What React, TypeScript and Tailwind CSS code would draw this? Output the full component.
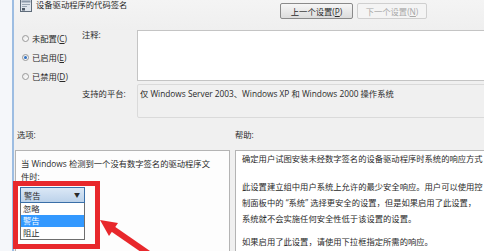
import React from 'react';

const Radio: React.FC<{ checked?: boolean; label: string; hotkey: string }> = ({ checked, label, hotkey }) => (
  <div className="flex items-center h-[13px] gap-[3px]">
    <div className="w-[7px] h-[7px] rounded-full border border-[#9a9a9a] bg-gradient-to-br from-[#e6e6e6] to-[#ffffff] flex items-center justify-center">
      {checked && <div className="w-[3px] h-[3px] rounded-full bg-[#2f6fc0]" />}
    </div>
    <span className="whitespace-nowrap">
      {label}(<u>{hotkey}</u>)
    </span>
  </div>
);

const PolicyIcon = () => (
  <svg width="12" height="13" viewBox="0 0 12 13">
    <rect x="0.5" y="0.5" width="11" height="12" fill="#dfe5ec" stroke="#5f6c7a" />
    <rect x="1.5" y="1.5" width="9" height="2" fill="#8a98a8" />
    <rect x="2" y="5" width="8" height="1" fill="#9aa6b3" />
    <rect x="2" y="7" width="5" height="1" fill="#9aa6b3" />
    <rect x="2" y="9" width="3" height="2.5" fill="#4f5b68" />
  </svg>
);

export default function App() {
  return (
    <div className="w-[484px] h-[251px] overflow-hidden flex relative font-['Open_Sans','Noto_Sans_CJK_SC',sans-serif] text-[8.3px] leading-[13px] text-[#2a2a2a]">
      <div className="w-[12px] shrink-0 bg-[#f5f7fa]" />
      <div className="w-[2px] shrink-0 bg-[#9dbde2]" />

      <div className="flex-1 min-w-0 bg-[#f0f0f0] flex flex-col">
        {/* Header */}
        <div className="h-[30px] shrink-0 flex items-start bg-gradient-to-b from-[#f4f4f4] to-[#efefef]">
          <div className="flex items-center gap-[4px] pl-[6px] -mt-[1px] h-[12px]">
            <PolicyIcon />
            <span className="whitespace-nowrap leading-[10px]">设备驱动程序的代码签名</span>
          </div>
          <div className="ml-auto mr-[57px] mt-[3px] flex gap-[4px]">
            <div className="w-[73px] h-[16px] border border-[#8a8a8a] rounded-[2px] bg-gradient-to-b from-[#f6f6f6] to-[#dcdcdc] flex items-center justify-center whitespace-nowrap">
              上一个设置(<u>P</u>)
            </div>
            <div className="w-[70px] h-[16px] border border-[#cfcfcf] rounded-[2px] bg-[#f4f4f4] text-[#a8a8a8] flex items-center justify-center whitespace-nowrap">
              下一个设置(<u>N</u>)
            </div>
          </div>
        </div>

        {/* State + comment + platform */}
        <div className="h-[88px] shrink-0 flex">
          <div className="w-[68px] shrink-0 pl-[8px] pt-[2px] flex flex-col gap-[6px]">
            <Radio label="未配置" hotkey="C" />
            <Radio label="已启用" hotkey="E" checked />
            <Radio label="已禁用" hotkey="D" />
          </div>
          <div className="w-[55px] shrink-0 flex flex-col">
            <div className="mt-[-2px] whitespace-nowrap">注释:</div>
            <div className="mt-[46px] whitespace-nowrap">支持的平台:</div>
          </div>
          <div className="flex-1 -mr-[6px] flex flex-col">
            <div className="h-[51px] bg-white border border-[#c4c4c4]" />
            <div className="mt-[3px] h-[34px] border border-[#dadada] rounded-[2px] bg-[#f0f0f0] pl-[2px] pt-[2px] whitespace-nowrap">
              仅 Windows Server 2003、Windows XP 和 Windows 2000 操作系统
            </div>
          </div>
        </div>

        {/* Section labels */}
        <div className="h-[32px] shrink-0 flex items-center">
          <div className="w-[221px] pl-[3px] pt-[1px]">选项:</div>
          <div className="pt-[1px]">帮助:</div>
        </div>

        {/* Panels */}
        <div className="flex-1 flex gap-[5px] pl-[1px]">
          <div className="w-[215px] shrink-0 h-[110px] bg-[#fdfdfd] border border-[#b4b4b4] pl-[5px] pt-[6px]">
            <div className="whitespace-nowrap">当 Windows 检测到一个没有数字签名的驱动程序文</div>
            <div>件时:</div>
            <div className="mt-[4px] -ml-[1px] w-[65px]">
              <div className="h-[16px] border border-[#3a6fa8] bg-gradient-to-b from-[#dbe8f6] to-[#bcd2ea] flex items-center justify-between pl-[3px] pr-[4px]">
                <span>警告</span>
                <span className="text-[6px] leading-none">▼</span>
              </div>
              <div className="border border-t-0 border-[#6e6e6e] bg-white">
                <div className="h-[12px] leading-[12px] pl-[2px]">忽略</div>
                <div className="h-[12px] leading-[12px] pl-[2px] bg-[#3399ff] text-white">警告</div>
                <div className="h-[12px] leading-[12px] pl-[2px]">阻止</div>
              </div>
            </div>
          </div>
          <div className="flex-1 -mr-[6px] h-[110px] bg-white border border-[#b4b4b4] pl-[6px] leading-[16px] whitespace-nowrap">
            <div className="leading-[15px]">确定用户试图安装未经数字签名的设备驱动程序时系统的响应方式</div>
            <div className="mt-[13px]">
              <div>此设置建立组中用户系统上允许的最少安全响应。用户可以使用控</div>
              <div>制面板中的 “系统” 选择更安全的设置，但是如果启用了此设置，</div>
              <div>系统就不会实施任何安全性低于该设置的设置。</div>
            </div>
            <div className="mt-[7px]">如果启用了此设置，请使用下拉框指定所需的响应。</div>
          </div>
        </div>
      </div>

      {/* Annotation overlay */}
      <div className="absolute left-[13px] top-[181px] w-[87px] h-[68px] border-[5px] border-[#e8282c]" />
      <svg className="absolute left-0 top-0" width="484" height="251" viewBox="0 0 484 251">
        <line x1="152" y1="256" x2="110" y2="227" stroke="#e8282c" strokeWidth="6" />
        <polygon points="100,220 118,223 109,236" fill="#e8282c" />
      </svg>
    </div>
  );
}
